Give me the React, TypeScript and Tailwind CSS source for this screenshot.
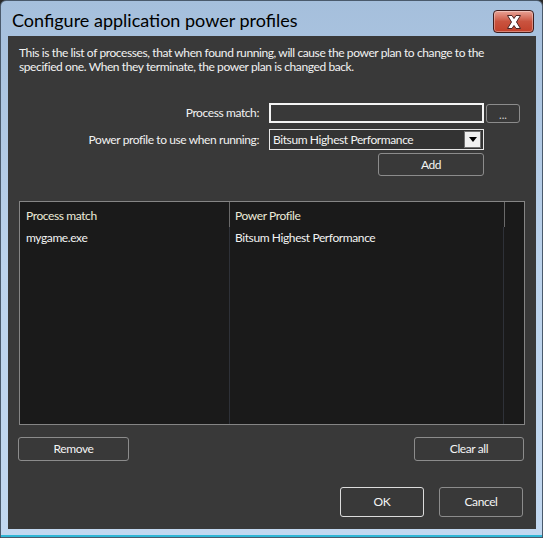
import React from "react";

const F = { fontFamily: 'Lato, "Noto Sans", sans-serif' };

function Btn({ w, h, label, strong }: { w: string; h: string; label: string; strong?: boolean }) {
  return (
    <div
      className={`${w} ${h} flex items-center justify-center rounded-[3px] border text-[12px] text-[#f4f4f4] bg-[#393939] ${
        strong ? "border-[#dcdcdc]" : "border-[#8c8c8c]"
      }`}
    >
      {label}
    </div>
  );
}

export default function App() {
  return (
    <div className="w-[543px] h-[538px] bg-[#2a2a2a]" style={F}>
      <div className="w-[543px] h-[538px] rounded-t-[6px] border border-[#4a5a6c] bg-gradient-to-b from-[#a5bfdc] via-[#bcd3ec] to-[#c2d8f0] flex flex-col">
        {/* title bar */}
        <div className="h-[35px] flex items-start justify-between shrink-0">
          <div className="pl-[11px] pt-[8px] text-[18px] leading-[23px] text-black">
            Configure application power profiles
          </div>
          <div className="mt-[9px] mr-[8px] w-[41px] h-[23px] rounded-[4px] border border-[#3f1d1d] bg-gradient-to-b from-[#e8a296] via-[#c9533f] to-[#c2402a] flex items-center justify-center shadow-[inset_0_0_0_1px_rgba(255,255,255,0.35)]">
            <svg width="20" height="16" viewBox="0 0 20 16">
              <path
                d="M3.5 1.5 L8 1.5 L10 4.5 L12 1.5 L16.5 1.5 L12.5 8 L16.5 14.5 L12 14.5 L10 11.5 L8 14.5 L3.5 14.5 L7.5 8 Z"
                fill="#ffffff"
                stroke="#4a2424"
                strokeWidth="1"
                strokeLinejoin="round"
              />
            </svg>
          </div>
        </div>
        {/* content */}
        <div className="ml-[7px] mr-[6px] h-[493px] bg-[#393939] flex flex-col text-[12px] tracking-[-0.4px] text-[#f2f2f2]">
          <div className="pl-[11px] pt-[10px] leading-[14px] whitespace-nowrap">
            <div>This is the list of processes, that when found running, will cause the power plan to change to the</div>
            <div>specified one. When they terminate, the power plan is changed back.</div>
          </div>

          {/* row 1 */}
          <div className="mt-[29px] h-[20px] flex items-center">
            <div className="w-[251px] text-right">Process match:</div>
            <div className="ml-[10px] w-[215px] h-[20px] border-2 border-[#f4f4f4] bg-[#393939]" />
            <div className="ml-[2px] w-[34px] h-[19px] rounded-[3px] border border-[#8c8c8c] flex items-end justify-center text-[11px] leading-[14px] text-[#d0d0d0] tracking-normal">
              ...
            </div>
          </div>

          {/* row 2 */}
          <div className="mt-[6px] h-[21px] flex items-center">
            <div className="w-[251px] text-right">Power profile to use when running:</div>
            <div className="ml-[10px] w-[215px] h-[21px] border border-[#e8e8e8] bg-[#333333] flex items-center justify-between pl-[3px] pr-[2px]">
              <span>Bitsum Highest Performance</span>
              <div className="w-[17px] h-[17px] bg-[#f0f0f0] border border-[#707070] flex items-center justify-center">
                <svg width="8" height="5" viewBox="0 0 8 5">
                  <path d="M0 0 H8 L4 5 Z" fill="#000" />
                </svg>
              </div>
            </div>
          </div>

          {/* row 3 */}
          <div className="mt-[3px] ml-[370px]">
            <Btn w="w-[106px]" h="h-[23px]" label="Add" />
          </div>

          {/* list */}
          <div className="mt-[25px] ml-[11px] w-[506px] h-[224px] border border-[#858585] bg-[#1a1a1a] flex flex-col">
            <div className="h-[25px] flex text-[#ecebd9]">
              <div className="w-[210px] pl-[6px] pt-[5px] border-r border-[#6a6a6a]">Process match</div>
              <div className="w-[275px] pl-[5px] pt-[5px] border-r border-[#6a6a6a]">Power Profile</div>
            </div>
            <div className="flex-1 flex">
              <div className="w-[210px] pl-[6px] pt-[2px] border-r border-[#2e3138]">mygame.exe</div>
              <div className="w-[274px] pl-[5px] pt-[2px] border-r border-[#2e3138]">Bitsum Highest Performance</div>
            </div>
          </div>

          {/* buttons */}
          <div className="mt-[12px] flex justify-between pl-[10px] pr-[12px]">
            <Btn w="w-[111px]" h="h-[24px]" label="Remove" />
            <Btn w="w-[110px]" h="h-[24px]" label="Clear all" />
          </div>

          <div className="mt-[26px] flex justify-end gap-[15px] pr-[13px]">
            <Btn w="w-[84px]" h="h-[30px]" label="OK" strong />
            <Btn w="w-[84px]" h="h-[30px]" label="Cancel" />
          </div>
        </div>
        <div className="mt-auto h-[2px] bg-[#2fb7d6]" />
      </div>
    </div>
  );
}
